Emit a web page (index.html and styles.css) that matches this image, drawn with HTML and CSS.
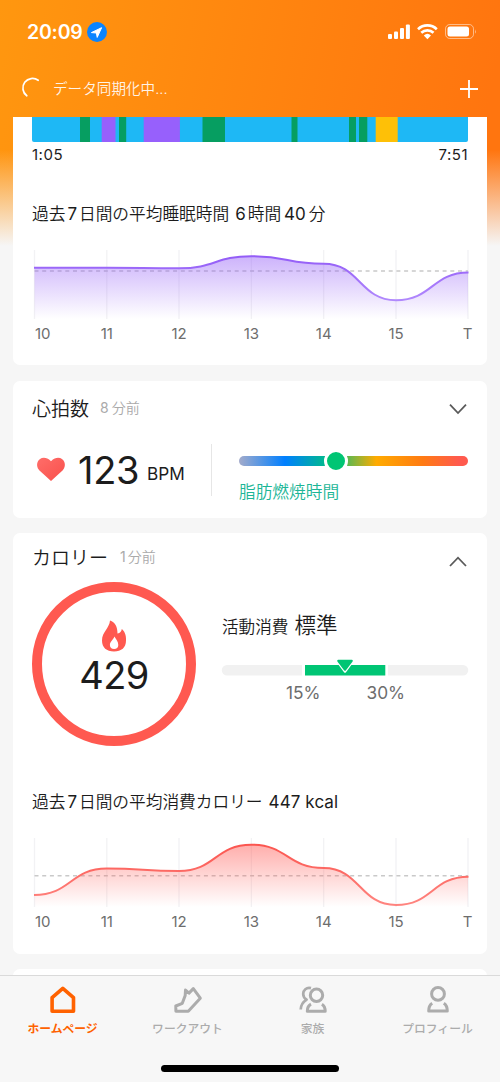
FILE: index.html
```html
<!DOCTYPE html>
<html lang="ja">
<head>
<meta charset="utf-8">
<title>ホームページ</title>
<link rel="stylesheet" href="styles.css">
</head>
<body>
<div class="app">
  <header class="header">
    <div class="status">
      <span class="clock">20:09</span>
      <svg class="location" width="20" height="20" viewBox="0 0 20 20"><circle cx="10" cy="10" r="10" fill="#0a84ff"/><path d="M4.400 10.600 14.600 5.700 10.200 15.400 9.400 11Z" fill="#fff" stroke="#fff" stroke-width="1" stroke-linejoin="round"/></svg>
      <svg class="signals" width="90" height="18" viewBox="0 0 90 18" fill="#fff">
        <rect x="1" y="11" width="4" height="5" rx="1.1"/><rect x="7" y="8.5" width="4" height="7.5" rx="1.1"/><rect x="13" y="5" width="4" height="11" rx="1.1"/><rect x="18.9" y="1.5" width="4" height="14.500" rx="1.1"/>
        <g fill="none" stroke="#fff" stroke-width="2.7"><path d="M31 6.200a13.700 13.700 0 0 1 18.800 0"/><path d="M34.300 9.700a9 9 0 0 1 12.200 0"/></g>
        <path d="M36.800 12.400a5.400 5.400 0 0 1 7.200 0L40.400 16.300Z"/>
        <rect x="58.500" y="1.500" width="28" height="14" rx="4.300" fill="none" stroke="#fff" stroke-opacity=".5"/>
        <rect x="60.500" y="3.500" width="21.500" height="10" rx="2.500"/><path d="M88 6.200q1.800 2.300 0 4.600z" opacity=".5"/>
      </svg>
    </div>
    <div class="sync">
      <svg class="spinner" width="22" height="22" viewBox="0 0 22 22"><path d="M16.200 2.300A9.200 9.200 0 0 0 4.800 17.800" fill="none" stroke="#fff" stroke-width="1.7" stroke-linecap="round"/></svg>
      <span class="sync-text">データ同期化中...</span>
      <svg class="plus" width="18" height="18" viewBox="0 0 18 18"><path d="M9 0v18M0 9h18" stroke="#fff" stroke-width="1.800"/></svg>
    </div>
  </header>

  <main class="cards">
    <section class="card card-sleep">
      <svg class="stages" width="436" height="25" viewBox="0 0 436 25">
        <path d="M0 0H436V23a2 2 0 0 1-2 2H2a2 2 0 0 1-2-2Z" fill="#1eb8f5"/>
        <g fill="#069e61"><rect x="48" width="10" height="25"/><rect x="87" width="7.200" height="25"/><rect x="170.500" width="22.500" height="25"/><rect x="259.500" width="6" height="25"/><rect x="317" width="7" height="25"/><rect x="327" width="8.300" height="25"/></g>
        <g fill="#9760fc"><rect x="69.700" width="13.800" height="25"/><rect x="111.700" width="36.200" height="25"/></g>
        <rect x="343.700" width="22" height="25" fill="#fec007"/>
      </svg>
      <div class="range"><span>1:05</span><span>7:51</span></div>
      <h2 class="average">過去<b class="n7">7</b>日間の平均睡眠時間<b class="n6">6</b>時間<b class="n40">40</b>分</h2>
      <svg class="chart" width="436" height="96" viewBox="0 0 436 96">
        <defs><linearGradient id="sleepFill" gradientUnits="userSpaceOnUse" x1="0" y1="6" x2="0" y2="69"><stop offset="0" stop-color="#935cf7" stop-opacity=".47"/><stop offset="1" stop-color="#935cf7" stop-opacity="0"/></linearGradient>
        <linearGradient id="sleepLine" gradientUnits="userSpaceOnUse" x1="0" y1="6" x2="0" y2="69"><stop offset="0" stop-color="#935cf7"/><stop offset="1" stop-color="#bd9bff"/></linearGradient></defs>
        <path class="grid" d="M2.500 0V69M74.800 0V69M147 0V69M219.400 0V69M291.700 0V69M364 0V69M436 0V69"/>
        <path class="mean" d="M2.500 21H436"/>
        <path d="M2.500 17.700H74.800C110.900 17.700 110.900 18.300 147 18.300C183.200 18.300 183.200 6.200 219.400 6.200C255.500 6.200 255.500 13.700 291.700 13.700C327.800 13.700 327.800 50.200 364 50.200C400.200 50.200 400.200 22.500 436 22.500V69H2.500Z" fill="url(#sleepFill)"/>
        <path d="M2 17.700H74.800C110.900 17.700 110.900 18.300 147 18.300C183.200 18.300 183.200 6.200 219.400 6.200C255.500 6.200 255.500 13.700 291.700 13.700C327.800 13.700 327.800 50.200 364 50.200C400.200 50.200 400.200 22.500 436.500 22.500" fill="none" stroke="url(#sleepLine)" stroke-width="2"/>
        <g class="axis"><text x="10.700" y="89">10</text><text x="74.800" y="89">11</text><text x="147" y="89">12</text><text x="219.400" y="89">13</text><text x="291.700" y="89">14</text><text x="364" y="89">15</text><text x="435.700" y="89">T</text></g>
      </svg>
    </section>

    <section class="card card-heart">
      <div class="title-row"><h2 class="title">心拍数</h2><span class="ago"><i class="gap">8</i>分前</span>
        <svg class="chevron" width="20" height="12" viewBox="0 0 20 12"><path d="M2 1.700 10 10 18 1.700"/></svg></div>
      <div class="heart-row">
        <svg class="heart" width="30" height="25" viewBox="0 0 30 25"><defs><linearGradient id="heartFill" x1="0" y1="0" x2="1" y2="1"><stop stop-color="#ff6d69"/><stop offset="1" stop-color="#f9504b"/></linearGradient></defs><path d="M15 24 3.200 13.200C-3 6.500 5.500-4.800 15 4.200C24.500-4.800 33 6.500 26.800 13.200Z" fill="url(#heartFill)"/></svg>
        <span class="bpm">123</span><span class="unit">BPM</span>
        <div class="zone">
          <div class="zone-bar"><span class="knob"></span></div>
          <div class="zone-label">脂肪燃焼時間</div>
        </div>
      </div>
    </section>

    <section class="card card-cal">
      <div class="title-row"><h2 class="title">カロリー</h2><span class="ago"><i class="gap-small">1</i>分前</span>
        <svg class="chevron" width="20" height="12" viewBox="0 0 20 12"><path d="M2 10 10 1.700 18 10"/></svg></div>
      <div class="cal-row">
        <div class="ring">
          <svg width="26" height="32" viewBox="0 0 26 32"><path d="M9 .5C8.500 8 1 12 1 20.500C1 27.500 5.500 31.500 13 31.500C20.500 31.500 25 27.500 25 20.500C25.500 15 23 10.500 20.800 9C20.400 11.500 19 13.500 16.500 13.400C16.500 6.500 14 2 9 .5Z" fill="#ff5950"/><path d="M13.400 16.500C15 19.500 17.300 21.500 17.300 25C17.300 27.500 15.700 29 13.100 29C10.500 29 8.900 27.500 8.900 25C8.900 21.500 12.300 20 13.400 16.500Z" fill="#fff"/></svg>
          <span class="ring-value">429</span>
        </div>
        <div class="activity">
          <div class="activity-title">活動消費<strong>標準</strong></div>
          <svg class="level" width="246" height="16" viewBox="0 0 246 16">
            <path d="M5 5H80V15.500H5A5.200 5.200 0 0 1 5 5Z" fill="#f1f1f1"/><path d="M166 5H241A5.200 5.200 0 0 1 241 15.500H166Z" fill="#f1f1f1"/><rect x="83" y="5" width="80.300" height="10.500" fill="#00c574"/>
            <path d="M114.500 0H131.500L123 11.500Z" fill="#fff" stroke="#fff" stroke-width="2.500" stroke-linejoin="round"/><path d="M116.200 .800H129.800L123 9.800Z" fill="#00c574" stroke="#00c574" stroke-width="2" stroke-linejoin="round"/>
          </svg>
          <div class="level-labels"><span>15%</span><span>30%</span></div>
        </div>
      </div>
      <h2 class="average">過去<b class="n7">7</b>日間の平均消費カロリー<b class="kcal">447 kcal</b></h2>
      <svg class="chart" width="436" height="96" viewBox="0 0 436 96">
        <defs><linearGradient id="calFill" gradientUnits="userSpaceOnUse" x1="0" y1="6" x2="0" y2="69"><stop offset="0" stop-color="#ff5550" stop-opacity=".48"/><stop offset="1" stop-color="#ff5550" stop-opacity="0"/></linearGradient>
        <linearGradient id="calLine" gradientUnits="userSpaceOnUse" x1="0" y1="6" x2="0" y2="69"><stop offset="0" stop-color="#fb554f"/><stop offset="1" stop-color="#ff8681"/></linearGradient></defs>
        <path class="grid" d="M2.500 0V69M74.800 0V69M147 0V69M219.400 0V69M291.700 0V69M364 0V69M436 0V69"/>
        <path class="mean" d="M2.500 37.700H436"/>
        <path d="M2.500 57C38.600 57 38.600 30.500 74.800 30.500C110.900 30.500 110.900 33 147 33C183.200 33 183.200 6.700 219.400 6.700C255.500 6.700 255.500 30 291.700 30C327.800 30 327.800 67 364 67C400.200 67 400.200 38.800 436 38.800V69H2.500Z" fill="url(#calFill)"/>
        <path d="M2 57C38.600 57 38.600 30.500 74.800 30.500C110.900 30.500 110.900 33 147 33C183.200 33 183.200 6.700 219.400 6.700C255.500 6.700 255.500 30 291.700 30C327.800 30 327.800 67 364 67C400.200 67 400.200 38.800 436.500 38.800" fill="none" stroke="url(#calLine)" stroke-width="2"/>
        <g class="axis"><text x="10.700" y="89">10</text><text x="74.800" y="89">11</text><text x="147" y="89">12</text><text x="219.400" y="89">13</text><text x="291.700" y="89">14</text><text x="364" y="89">15</text><text x="435.700" y="89">T</text></g>
      </svg>
    </section>
    <section class="card card-next"></section>
  </main>

  <nav class="tabs">
    <a class="tab active"><svg width="30" height="30" viewBox="0 0 30 30"><path d="M4.100 12.700 14.800 3.300 25.500 12.700V26.200H4.100Z"/></svg><span>ホームページ</span></a>
    <a class="tab"><svg width="30" height="30" viewBox="0 0 30 30"><path d="M12.500 5 16 8.100 20.300 3.600 27.300 13.200 15.300 26.200H2.900L2.800 21 9.300 18.300 12.200 10.500Z"/></svg><span>ワークアウト</span></a>
    <a class="tab"><svg width="30" height="30" viewBox="0 0 30 30"><circle cx="18.500" cy="10.300" r="6.200"/><path d="M13 19.200C10.500 20.500 9.300 23.500 9.300 26.300H27.200C27.200 23.500 26 20.500 23.900 19.200"/><path d="M13 3.100C8.500 1.900 5 5.200 5.200 9C5.300 11.500 6.500 13.500 8.600 14.700C5 17 2.900 20.500 2.700 24.500" stroke-width="2.700"/></svg><span>家族</span></a>
    <a class="tab"><svg width="30" height="30" viewBox="0 0 30 30"><circle cx="15" cy="8.900" r="6.400"/><path d="M9.200 18.200C6.700 19.800 5.700 22.500 5.700 26.100H24.300C24.300 22.500 23.300 19.800 20.800 18.200"/></svg><span>プロフィール</span></a>
    <i class="home-indicator"></i>
  </nav>
</div>
</body>
</html>
```
FILE: styles.css
```css
* { box-sizing: border-box; }
body { margin: 0; background: #f6f6f6; font-family: Inter, "Noto Sans CJK JP", sans-serif; color: #1c1c1c; }
h2, b, strong, i { margin: 0; font-weight: 400; font-style: normal; }
svg { display: block; flex: none; overflow: visible; }
.app { width: 500px; height: 1082px; display: flex; flex-direction: column; overflow: hidden;
  background: linear-gradient(180deg, rgba(246,246,246,0) 150px, #f6f6f6 246px), linear-gradient(102deg, #ff970f 0, #ff750f 500px); }
.header { height: 117px; flex: none; color: #fff; }
.status { display: flex; align-items: center; height: 64px; padding: 0 23px 0 27px; }
.clock { font-size: 19.500px; font-weight: 600; width: 59.500px; letter-spacing: -.2px; }
.signals { margin-left: auto; }
.sync { display: flex; align-items: center; height: 49px; padding: 0 22px; }
.sync-text { margin: -2px 0 0 9px; font-size: 14.600px; opacity: .9; font-weight: 350; }
.plus { margin-left: auto; }

.cards { flex: 1; min-height: 0; overflow: hidden; padding: 0 13px; display: flex; flex-direction: column; }
.card { flex: none; background: #fff; border-radius: 7px; padding: 0 19px; }
.card-sleep { height: 248px; border-radius: 0 0 7px 7px; margin-bottom: 16px; }
.card-heart { height: 137px; margin-bottom: 15px; }
.card-cal { height: 421px; margin-bottom: 15px; }
.card-next { height: 30px; }
.range { display: flex; justify-content: space-between; height: 24px; line-height: 25px; font-size: 15px; letter-spacing: .5px; }
.average { height: 30px; line-height: 30px; font-size: 16.700px; font-weight: 350; white-space: nowrap; }
.card-sleep .average { margin: 33px 0 21px; }
.card-cal .average { margin: 33px 0 21px; }
.average b { font-size: 17px; }
.n7 { margin: 0 2px; }
.n40 { margin: 0 3px; }
.n6 { margin: 0 2px 0 6px; }
.kcal { margin-left: 6px; letter-spacing: .1px; }
.grid { stroke: #f2f2f4; stroke-width: 1.300; }
.mean { stroke: #c9c9c9; stroke-width: 1.500; stroke-dasharray: 4 3.700; }
.axis { font-size: 15px; fill: #6d6d6d; text-anchor: middle; }

.title-row { display: flex; align-items: center; }
.card-heart .title-row { height: 55px; }
.card-cal .title-row { height: 49px; }
.title { font-size: 19px; font-weight: 350; margin-top: -3px; }
.ago { margin: -3px 0 0 11px; font-size: 14px; font-weight: 350; color: #aaa; }
.gap { margin-right: 3px; }
.gap-small { margin: 0 2px 0 1px; }
.chevron { margin-left: auto; fill: none; stroke: #5a5a5a; stroke-width: 1.800; }
.card-cal .chevron { margin-top: 8px; }
.heart-row { display: flex; align-items: center; height: 68px; }
.heart { margin: -1px 0 0 4px; }
.bpm { font-size: 38px; width: 69px; margin-left: 12px; letter-spacing: -.3px; }
.unit { font-size: 17.200px; padding-top: 6px; width: 64px; }
.zone { height: 52px; flex: 1; border-left: 1px solid #e6e6e6; padding: 12px 0 0 27px; }
.zone-bar { height: 10px; border-radius: 5px; display: flex; align-items: center; background: linear-gradient(90deg, #a3abcb 0, #007fff 20%, #00c080 40%, #ffab00 60%, #ff7b12 80%, #ff5a4e 96%); }
.knob { width: 24px; height: 24px; margin-left: 85px; border: 3px solid #fff; border-radius: 50%; background: #00c574; }
.zone-label { line-height: 24px; margin-top: 14px; font-size: 16.700px; font-weight: 350; color: #1cb697; white-space: nowrap; }

.cal-row { display: flex; height: 172px; }
.ring { width: 164px; height: 164px; border: 10px solid #ff5950; border-radius: 50%; display: flex; flex-direction: column; align-items: center; padding-top: 28px; }
.ring-value { font-size: 38px; line-height: 46px; letter-spacing: -.6px; }
.activity { margin-left: 26px; padding-top: 25px; }
.activity-title { height: 36px; line-height: 36px; font-size: 16.600px; font-weight: 350; }
.activity-title strong { font-size: 21.500px; margin-left: 6px; font-weight: 350; }
.level { margin-top: 17px; }
.level-labels { display: flex; padding-left: 64px; gap: 46px; font-size: 17.300px; line-height: 24px; color: #6d6d6d; margin-top: 5px; }

.tabs { position: relative; height: 107px; flex: none; display: flex; border-top: 1px solid #dadada; background: #f7f7f7; }
.tab { flex: 1; display: flex; flex-direction: column; align-items: center; padding-top: 9px; color: #acacac; font-size: 11.800px; font-weight: 500; }
.tab svg { fill: none; stroke: currentColor; stroke-width: 3; stroke-linejoin: round; }
.tab.active svg { stroke-width: 3.600; }
.tab span { line-height: 20px; margin-top: 4px; white-space: nowrap; }
.tab.active { color: #ff6200; font-weight: 700; }
.home-indicator { position: absolute; left: 161px; bottom: 10px; width: 178px; height: 7px; border-radius: 4px; background: #000; }
```
